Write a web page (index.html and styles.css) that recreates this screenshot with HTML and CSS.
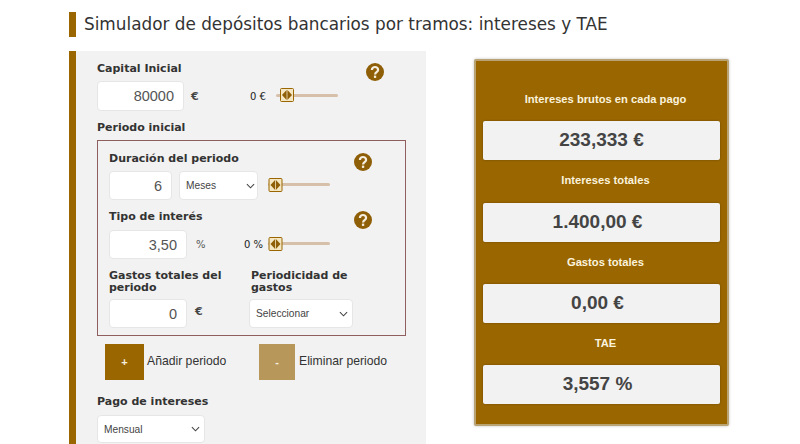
FILE: index.html
```html
<!DOCTYPE html>
<html lang="es">
<head>
    <meta charset="UTF-8">
    <meta name="viewport" content="width=device-width, initial-scale=1.0">
    <title>Simulador de depósitos bancarios por tramos</title>
    <link rel="stylesheet" href="styles.css">
</head>
<body>
    <svg class="icon-defs" width="0" height="0">
        <symbol id="help" viewBox="0 0 18 18">
            <circle cx="9" cy="9" r="9" fill="#8f5f07"/>
            <path d="M5.9 7a3.1 3 0 0 1 6.2 0c0 2.2-3 2.2-3 4.4" fill="none" stroke="#f6efe0" stroke-width="2.2"/>
            <rect x="7.9" y="12.6" width="2.3" height="2.3" fill="#f6efe0"/>
        </symbol>
        <symbol id="grip" viewBox="0 0 14 14">
            <rect x="0.5" y="0.5" width="13" height="13" rx="1" fill="#f5e6c4" stroke="#996600"/>
            <path d="M6.6 2 2 7l4.6 5zM7.4 2 12 7l-4.6 5z" fill="#8f5f07"/>
        </symbol>
    </svg>

    <h1 class="page-title">Simulador de depósitos bancarios por tramos: intereses y TAE</h1>

    <main class="layout">
        <section class="form-panel">
            <div class="field capital">
                <div class="label-row">
                    <label class="label">Capital Inicial</label>
                    <svg class="help"><use href="#help"/></svg>
                </div>
                <div class="control-row">
                    <input class="input w-87" type="text" value="80000">
                    <span class="unit unit-capital">€</span>
                    <span class="min-value">0 €</span>
                    <div class="slider slider-capital"><svg class="grip"><use href="#grip"/></svg></div>
                </div>
            </div>

            <div class="section-label label">Periodo inicial</div>

            <div class="period-box">
                <div class="label-row">
                    <label class="label">Duración del periodo</label>
                    <svg class="help"><use href="#help"/></svg>
                </div>
                <div class="control-row">
                    <input class="input w-63" type="text" value="6">
                    <div class="select select-tight w-79"><span>Meses</span><svg class="chev" viewBox="0 0 10 6"><path d="M1 1l4 4 4-4" fill="none" stroke="#444" stroke-width="1.2"/></svg></div>
                    <div class="slider slider-duration"><svg class="grip"><use href="#grip"/></svg></div>
                </div>

                <div class="label-row interest">
                    <label class="label">Tipo de interés</label>
                    <svg class="help"><use href="#help"/></svg>
                </div>
                <div class="control-row">
                    <input class="input w-78" type="text" value="3,50">
                    <span class="unit unit-percent">%</span>
                    <span class="min-value min-percent">0 %</span>
                    <div class="slider"><svg class="grip"><use href="#grip"/></svg></div>
                </div>

                <div class="costs">
                    <div class="cost-col">
                        <label class="label">Gastos totales del periodo</label>
                        <div class="control-row">
                            <input class="input w-78" type="text" value="0">
                            <span class="unit unit-cost">€</span>
                        </div>
                    </div>
                    <div class="cost-col freq">
                        <label class="label">Periodicidad de gastos</label>
                        <div class="select w-104"><span>Seleccionar</span><svg class="chev" viewBox="0 0 10 6"><path d="M1 1l4 4 4-4" fill="none" stroke="#444" stroke-width="1.2"/></svg></div>
                    </div>
                </div>
            </div>

            <div class="actions">
                <div class="action">
                    <button class="btn btn-add">+</button>
                    <span>Añadir periodo</span>
                </div>
                <div class="action action-remove">
                    <button class="btn btn-remove">-</button>
                    <span>Eliminar periodo</span>
                </div>
            </div>

            <div class="field payment">
                <label class="label">Pago de intereses</label>
                <div class="select select-short w-108"><span>Mensual</span><svg class="chev" viewBox="0 0 10 6"><path d="M1 1l4 4 4-4" fill="none" stroke="#444" stroke-width="1.2"/></svg></div>
            </div>
        </section>

        <aside class="results">
            <div class="result-label first">Intereses brutos en cada pago</div>
            <div class="result-value first-value">233,333 €</div>
            <div class="result-label tall">Intereses totales</div>
            <div class="result-value">1.400,00 €</div>
            <div class="result-label">Gastos totales</div>
            <div class="result-value">0,00 €</div>
            <div class="result-label">TAE</div>
            <div class="result-value">3,557 %</div>
        </aside>
    </main>
</body>
</html>
```

FILE: styles.css
```css
* {
    margin: 0;
    padding: 0;
    box-sizing: border-box;
}

html, body {
    height: 444px;
    overflow: hidden;
}

body {
    font-family: "DejaVu Sans", sans-serif;
    background: #ffffff;
    color: #333333;
    padding: 12px 0 0 69px;
}

.icon-defs {
    position: absolute;
}

.page-title {
    border-left: 7px solid #996600;
    padding-left: 8px;
    height: 25px;
    line-height: 25px;
    font-size: 16.85px;
    font-weight: 400;
    color: #333333;
    white-space: nowrap;
}

.layout {
    display: flex;
    align-items: flex-start;
    margin-top: 14px;
}

.form-panel {
    width: 357px;
    height: 393px;
    background: #f2f2f2;
    border-left: 7px solid #996600;
    padding: 12px 0 0 21px;
}

.label {
    display: block;
    font-size: 11px;
    line-height: 12px;
    font-weight: 700;
    color: #333333;
}

.label-row {
    display: flex;
    justify-content: space-between;
    align-items: flex-start;
    height: 13px;
    margin-bottom: 5px;
}

.help {
    width: 18px;
    height: 18px;
    flex: none;
}

.capital .help {
    margin-right: 42px;
}

.control-row {
    display: flex;
    align-items: center;
}

.input {
    height: 30px;
    border: 1px solid #e6e6e6;
    border-radius: 4px;
    background: #ffffff;
    text-align: right;
    padding-right: 9px;
    font-family: "Liberation Sans", sans-serif;
    font-size: 14.5px;
    color: #555555;
}

.w-87 { width: 87px; }
.w-63 { width: 63px; height: 29px; }
.w-78 { width: 78px; height: 29px; }
.w-79 { width: 79px; }
.w-104 { width: 104px; }
.w-108 { width: 108px; }

.unit {
    font-size: 11px;
    font-weight: 700;
    color: #444444;
}

.unit-capital { margin-left: 7px; width: 59px; }
.unit-percent { margin-left: 9px; width: 48px; color: #555555; font-weight: 400; font-size: 10px; }
.unit-cost { margin-left: 8px; margin-bottom: 4px; }

.min-value {
    width: 26px;
    font-size: 10px;
    color: #222222;
}

.min-percent {
    width: 24px;
}

.slider {
    position: relative;
    width: 62px;
    height: 14px;
    margin-bottom: 2px;
    display: flex;
    align-items: center;
}

.slider::before {
    content: "";
    width: 100%;
    height: 3px;
    border-radius: 2px;
    background: #d6c0aa;
}

.grip {
    position: absolute;
    left: 0;
    top: 0;
    width: 15px;
    height: 14px;
}

.slider-capital .grip {
    left: 4px;
    width: 14px;
}

.slider-duration {
    margin-left: 10px;
}

.section-label {
    margin-top: 11px;
}

.period-box {
    width: 309px;
    height: 196px;
    margin-top: 6px;
    border: 1px solid #8f5f5f;
    padding: 12px 11px 0 11px;
}

.period-box .label-row {
    height: 14px;
    margin-bottom: 4px;
}

.period-box .help {
    margin-right: 22px;
}

.period-box .select {
    margin-left: 7px;
}

.period-box .interest {
    margin-top: 11px;
    margin-bottom: 5px;
}

.costs {
    display: flex;
    margin-top: 11px;
}

.cost-col {
    width: 142px;
}

.cost-col .label {
    height: 24px;
    margin-bottom: 5px;
}

.cost-col.freq .select {
    margin-left: -2px;
}

.freq {
    width: 130px;
}

.select {
    display: flex;
    align-items: center;
    justify-content: space-between;
    height: 29px;
    border: 1px solid #e6e6e6;
    border-radius: 4px;
    background: #ffffff;
    padding: 0 4px 0 6px;
    font-family: "Liberation Sans", sans-serif;
    font-size: 10.2px;
    color: #444444;
}

.select-tight {
    padding-right: 2px;
}

.select-short {
    height: 28px;
}

.chev {
    width: 9px;
    height: 6px;
}

.actions {
    display: flex;
    margin-top: 8px;
    margin-left: 8px;
}

.action {
    display: flex;
    align-items: center;
    width: 154px;
    font-family: "Liberation Sans", sans-serif;
    font-size: 12.2px;
    color: #333333;
}

.action span {
    margin-left: 3px;
    margin-bottom: 2px;
}

.action-remove {
    width: auto;
}

.action-remove span {
    margin-left: 4px;
}

.btn {
    width: 39px;
    height: 36px;
    border: none;
    color: #f6efe0;
    font-size: 11px;
    font-weight: 700;
    font-family: "Liberation Sans", sans-serif;
}

.btn-add {
    background: #996600;
}

.btn-remove {
    width: 36px;
    background: #b8975a;
}

.payment {
    margin-top: 16px;
}

.payment .label {
    margin-bottom: 7px;
}

.results {
    width: 255px;
    height: 367px;
    margin-left: 48px;
    margin-top: 8px;
    background: #996600;
    border: 2px solid #b9a273;
    border-radius: 2px;
    box-shadow: 0 0 3px rgba(0, 0, 0, 0.25);
    padding: 0 7px;
}

.result-label {
    height: 42px;
    line-height: 40px;
    padding-left: 8px;
    text-align: center;
    font-family: "Liberation Sans", sans-serif;
    font-size: 11.2px;
    font-weight: 700;
    color: #fbf3dd;
}

.result-label.tall {
    height: 43px;
}

.result-label.first {
    height: 60px;
    padding-top: 18px;
}

.result-value {
    height: 39px;
    line-height: 38px;
    padding-right: 8px;
    text-align: center;
    background: #f2f2f2;
    border-radius: 2px;
    box-shadow: 0 0 2px rgba(60, 40, 0, 0.5);
    font-family: "Liberation Sans", sans-serif;
    font-size: 19px;
    font-weight: 700;
    color: #444444;
}

.result-value.first-value {
    padding-right: 0;
}
```
